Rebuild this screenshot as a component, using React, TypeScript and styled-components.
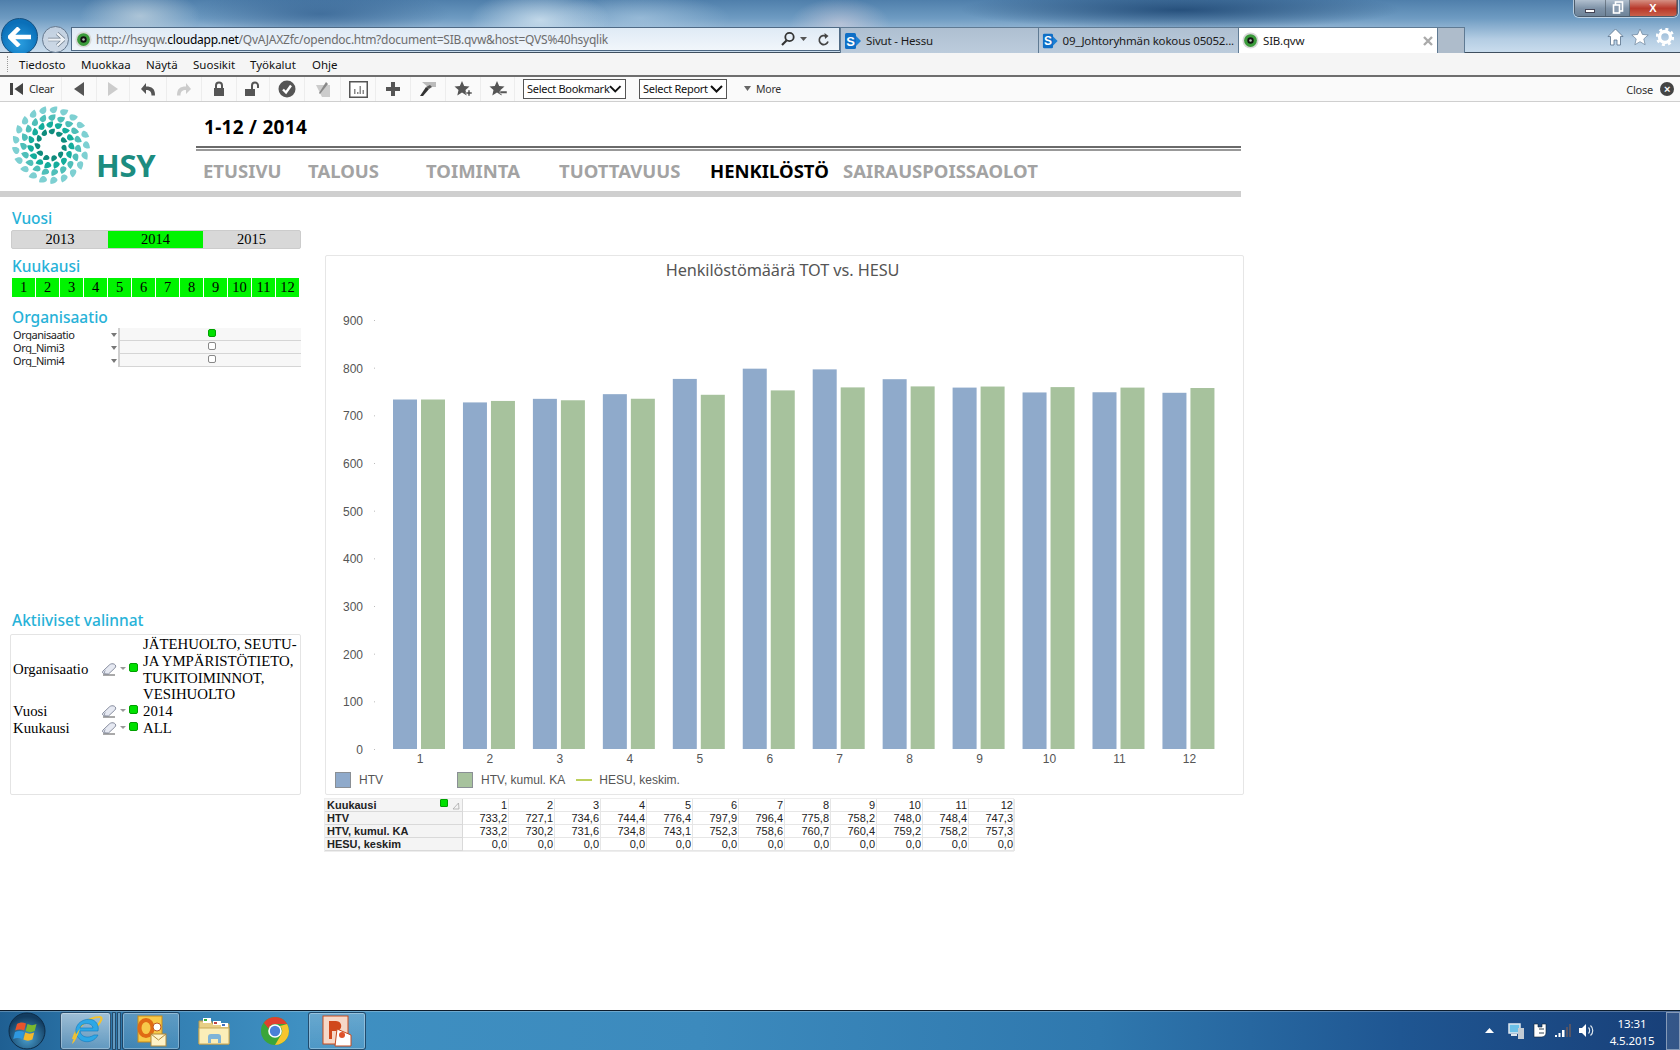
import React from 'react';
import styled, { createGlobalStyle } from 'styled-components';

const Global = createGlobalStyle`
  html, body { margin: 0; padding: 0; background: #fff; }
  * { box-sizing: border-box; }
  #root { width: 1680px; height: 1050px; overflow: hidden; }
`;
const UI = `"Noto Sans", "Liberation Sans", sans-serif`;
const SERIF = `"Liberation Serif", serif`;
const ARIAL = `"Liberation Sans", sans-serif`;

const Page = styled.div`
  width: 1680px; height: 1050px; display: flex; flex-direction: column; position: relative; overflow: hidden; background: #fff; font-family: ${UI};
`;
/* ---------- browser chrome ---------- */
const Glass = styled.header`
  height: 53px; flex: none; position: relative; display: flex; align-items: flex-start; padding-top: 27px;
  background:
    radial-gradient(ellipse 70px 30px at 540px 20px, rgba(220,235,245,.75), transparent),
    radial-gradient(ellipse 60px 28px at 140px 16px, rgba(200,215,225,.7), transparent),
    radial-gradient(ellipse 50px 26px at 840px 24px, rgba(225,215,225,.55), transparent),
    radial-gradient(ellipse 90px 25px at 640px 18px, rgba(190,215,235,.5), transparent),
    radial-gradient(ellipse 220px 20px at 1180px 10px, rgba(20,60,105,.75), transparent),
    radial-gradient(ellipse 130px 24px at 320px 14px, rgba(35,80,130,.55), transparent),
    linear-gradient(180deg, #4f7fab 0%, #6e9bc2 35%, #b4cde3 75%, #c9dced 100%);
  border-bottom: 1px solid #3f4f5f;
`;
const NavCluster = styled.div`
  width: 71px; height: 26px; flex: none; position: relative;
`;
const BackBtn = styled.div`
  position: absolute; left: 1px; top: -9px; width: 37px; height: 37px; border-radius: 50%;
  background: radial-gradient(circle at 50% 70%, #2a9ee0, #0a6fb8 70%); border: 1px solid #134f80;
  display: flex; align-items: center; justify-content: center;
`;
const FwdBtn = styled.div`
  position: absolute; left: 42px; top: -1px; width: 27px; height: 27px; border-radius: 50%;
  background: rgba(205,215,228,.8); border: 1px solid #65798f;
  display: flex; align-items: center; justify-content: center;
`;
const Address = styled.div`
  width: 769px; height: 24px; flex: none; display: flex; align-items: center; padding: 0 8px 0 3px; gap: 4px;
  background: linear-gradient(180deg, #dfeaf5, #f1f6fb); border: 1px solid #4f6a85; font-size: 12px; white-space: nowrap;
  color: #6d6d6d; font-family: ${UI}; letter-spacing: -0.02em;
`;
const Domain = styled.span` color: #000; `;
const AddressUrl = styled.div` flex: 1; `;
const AddressTools = styled.div` display: flex; align-items: center; gap: 4px; `;
const Tabs = styled.div` display: flex; height: 26px; flex: none; `;
const Tab = styled.div<{ $active?: boolean; $w: number }>`
  width: ${p => p.$w}px; display: flex; align-items: center; gap: 4px; padding: 0 4px 0 3px; font-size: 11.5px; white-space: nowrap; overflow: hidden;
  letter-spacing: -0.015em; color: #1a1a1a;
  background: ${p => (p.$active ? '#fff' : 'linear-gradient(180deg,#aebfd1,#bcccdc)')};
  border: 1px solid #5f7a93; border-bottom: none; margin-right: -1px;
`;
const TabBlank = styled.div`
  width: 28px; background: #aebccb; border: 1px solid #5f7a93; border-bottom: none;
`;
const TabLabel = styled.span` flex: 1; `;
const IeTools = styled.div`
  margin-left: auto; padding: 1px 6px 0 0; display: flex; gap: 7px; align-items: center;
`;
const WinControls = styled.div`
  position: absolute; right: 2px; top: -1px; width: 104px; height: 18px; display: flex; border: 1px solid #4c5c6c; border-top: none; border-radius: 0 0 5px 5px; overflow: hidden;
  box-shadow: 0 0 0 1px rgba(255,255,255,.55);
`;
const WinBtn = styled.div<{ $w: number; $close?: boolean }>`
  width: ${p => p.$w}px; display: flex; align-items: center; justify-content: center; color: #fff; font: bold 11px ${ARIAL};
  background: ${p => (p.$close ? 'linear-gradient(180deg,#d99b8e,#b8382a 55%,#c9604a)' : 'linear-gradient(180deg,#b7c5d3,#7f93a8 55%,#6e8398)')};
  border-right: 1px solid rgba(60,70,80,.5);
`;
const MinBar = styled.span` width: 10px; height: 4px; background: #fff; border: 1px solid #445; margin-top: 6px; `;

const MenuBar = styled.nav`
  height: 24px; flex: none; background: #f5f5f5; border-bottom: 2px solid #6e6e6e; display: flex; align-items: center; font-size: 11.5px; color: #111;
  padding-left: 7px; position: relative;
`;
const Grip = styled.span` width: 1px; height: 16px; border-left: 1px dotted #999; margin-right: 11px; `;
const MenuItem = styled.span<{ $w: number }>` width: ${p => p.$w}px; `;

const Toolbar = styled.div`
  height: 25px; flex: none; background: #fafafa; border-bottom: 1px solid #cfcfcf; display: flex; align-items: center; font-size: 11px; color: #333;
`;
const ToolClear = styled.div`
  width: 62px; height: 100%; padding: 0 0 1px 10px; display: flex; align-items: center; gap: 5px; border-right: 1px solid #ededed; letter-spacing: -0.03em;
`;
const ToolBtn = styled.div<{ $w?: number }>`
  width: ${p => p.$w ?? 35}px; height: 100%; display: flex; align-items: center; justify-content: center; border-right: 1px solid #ededed;
`;
const SelectBox = styled.div<{ $w: number; $ml: number }>`
  width: ${p => p.$w}px; margin-left: ${p => p.$ml}px; height: 20px; border: 1px solid #555; background: #fff; display: flex; align-items: center; justify-content: space-between; padding: 0 3px 1px 3px;
  font-size: 11px; color: #111; letter-spacing: -0.025em; white-space: nowrap;
`;
const More = styled.div` margin-left: 17px; padding-bottom: 1px; display: flex; align-items: center; gap: 5px; font-size: 10.5px; letter-spacing: -0.02em; `;
const CloseBox = styled.div` margin-left: auto; padding-right: 6px; display: flex; align-items: center; gap: 7px; letter-spacing: -0.02em; `;
const CloseDot = styled.span`
  width: 14px; height: 14px; border-radius: 50%; background: #444; color: #fff; font: bold 11px ${ARIAL}; display: inline-flex; align-items: center; justify-content: center;
`;

/* ---------- document ---------- */
const Doc = styled.main` flex: 1; min-height: 0; display: flex; flex-direction: column; `;
const Header = styled.div` height: 89px; flex: none; display: flex; width: 1241px; `;
const LogoBlock = styled.div` width: 196px; flex: none; position: relative; padding: 2px 0 0 10px; `;
const LogoWord = styled.span`
  position: absolute; left: 96px; top: 48px; font: bold 31px/1 ${UI}; color: #1c8c80; letter-spacing: -0.01em;
`;
const HeaderRight = styled.div` flex: 1; display: flex; flex-direction: column; `;
const TitleRow = styled.div`
  height: 46px; padding: 12px 0 0 8px; font: bold 19px/26px ${UI}; color: #000; letter-spacing: .015em; border-bottom: 2px solid #6a6a6a;
`;
const RuleTwo = styled.div` height: 2px; margin-top: 1px; background: #999; `;
const NavRow = styled.div` display: flex; padding: 8px 0 0 7px; `;
const NavItem = styled.div<{ $w: number; $active?: boolean }>`
  width: ${p => p.$w}px; font: bold 18.5px/24px ${UI}; color: ${p => (p.$active ? '#000' : '#a3a3a3')}; white-space: nowrap; letter-spacing: 0;
`;
const Strip = styled.div` width: 1241px; height: 6px; flex: none; background: #cfcfcf; `;
const Body = styled.div` flex: 1; min-height: 0; display: flex; `;
const Sidebar = styled.aside` width: 325px; flex: none; padding: 12px 0 0 11px; display: flex; flex-direction: column; `;
const SectionLabel = styled.div<{ $mt?: number }>`
  margin-top: ${p => p.$mt ?? 0}px; height: 18px; padding-left: 1px; font-size: 15.5px; line-height: 18px; color: #27b2d8; font-weight: 500;
`;
const YearRow = styled.div`
  width: 290px; height: 19px; margin-top: 3px; display: flex; background: #d8d8d8; border: 1px solid #ccc; border-radius: 2px;
`;
const YearCell = styled.div<{ $on?: boolean; $w: number }>`
  width: ${p => p.$w}px; text-align: center; font: 14.5px/17px ${SERIF}; color: #000; background: ${p => (p.$on ? '#00f400' : 'transparent')};
`;
const MonthRow = styled.div`
  width: 288px; height: 19px; margin: 3px 0 0 1px; display: grid; grid-template-columns: repeat(12, 24px); 
`;
const MonthCell = styled.div`
  background: #00f400; border-right: 1px solid #fff; text-align: center; font: 14.5px/18px ${SERIF}; color: #000;
`;
const OrgRows = styled.div` margin-top: 2px; `;
const OrgRow = styled.div`
  width: 290px; height: 13px; display: flex; font-size: 11px; line-height: 13px; color: #222; overflow: hidden;
`;
const OrgName = styled.div` width: 94px; padding-left: 2px; height: 13px; overflow: hidden; letter-spacing: -0.04em; `;
const OrgCaret = styled.div`
  width: 15px; display: flex; align-items: center; justify-content: flex-end; padding-right: 1px; border-right: 2px solid #cfcfcf;
`;
const CaretShape = styled.span`
  width: 0; height: 0; border-left: 3px solid transparent; border-right: 3px solid transparent; border-top: 4px solid #777;
`;
const OrgTrack = styled.div`
  flex: 1; background: #f7f7f7; border-bottom: 1px solid #d5d5d5; display: flex; justify-content: center; padding: 0 0 0 3px;
`;
const Led = styled.span<{ $on?: boolean }>`
  width: 8px; height: 8px; flex: none; margin-top: 1px; border-radius: 2px; border: 1px solid ${p => (p.$on ? '#00a000' : '#888')}; background: ${p => (p.$on ? '#00e000' : '#fff')};
`;
const SelLed = styled(Led)`
  width: 9px; height: 9px; margin-top: -5px;
`;
const SelBox = styled.div`
  width: 291px; height: 161px; margin: 5px 0 0 -1px; border: 1px solid #e4e4e4; border-radius: 2px; padding: 1px 2px 0;
`;
const SelRow = styled.div`
  display: grid; grid-template-columns: 89px 40px 1fr; font: 14.8px/16.8px ${SERIF}; color: #000;
`;
const SelLabel = styled.div` align-self: center; `;
const SelIcons = styled.div` align-self: center; display: flex; align-items: center; gap: 3px; height: 17px; `;
const SelCaret = styled.span`
  width: 0; height: 0; margin-top: -3px; border-left: 3px solid transparent; border-right: 3px solid transparent; border-top: 3px solid #999; 
`;
const SelValue = styled.div` padding-left: 1px; width: 158px; `;

const Main = styled.section` flex: 1; min-width: 0; padding-top: 58px; display: flex; flex-direction: column; `;
const ChartPanel = styled.div`
  width: 919px; height: 540px; border: 1px solid #e6e6e6; border-radius: 2px; display: flex; flex-direction: column;
`;
const ChartTitle = styled.div`
  height: 29px; padding: 3px 4px 0 0; text-align: center; font: 16.3px/22px ${UI}; color: #555; letter-spacing: -0.005em;
`;
const ChartSvg = styled.svg` display: block; flex: none; `;
const Legend = styled.div`
  flex: 1; display: flex; align-items: center; font: 12px ${ARIAL}; color: #555; padding: 0 0 0 9px;
`;
const LegendSwatch = styled.span<{ $c: string }>`
  width: 16px; height: 16px; background: ${p => p.$c}; border: 1px solid #8a8f95; margin-right: 8px;
`;
const LegendLine = styled.span` width: 16px; height: 2px; background: #bcd05c; margin: 0 7px 0 11px; `;
const LegendText = styled.span<{ $w?: number }>` width: ${p => (p.$w ? p.$w + 'px' : 'auto')}; `;
const Table = styled.div`
  margin: 3px 0 0 -1px; width: 690px; display: grid; grid-template-columns: 138px repeat(12, 46px); border: 1px solid #ededed; font: 11px/12px ${ARIAL}; color: #222;
`;
const HeadCell = styled.div`
  height: 13px; background: #f4f4f4; font-weight: bold; padding-left: 2px; border-bottom: 1px solid #d9d9d9; border-right: 1px solid #d9d9d9; position: relative; color: #222;
`;
const ValCell = styled.div`
  height: 13px; text-align: right; padding-right: 1px; border-bottom: 1px solid #e6e6e6; border-right: 1px solid #e6e6e6;
`;
const TableLed = styled.span`
  position: absolute; right: 14px; top: 0; width: 8px; height: 8px; background: #00e000; border: 1px solid #00a000; border-radius: 1px;
`;
const SortMark = styled.svg` position: absolute; right: 2px; top: 3px; `;

/* ---------- taskbar ---------- */
const Taskbar = styled.footer`
  height: 40px; flex: none; display: flex; align-items: center; position: relative; border-top: 1px solid #0c1c2c;
  background: linear-gradient(90deg, #1f5f92 0, #2d77ab 100px, #3f90c2 300px, #3c8abd 700px, #2f78ae 1100px, #1f5692 1400px, #183f78 1680px);
  box-shadow: inset 0 1px 0 rgba(255,255,255,.25);
`;
const Orb = styled.div` width: 60px; flex: none; display: flex; padding-left: 8px; `;
const TaskBtn = styled.div<{ $w: number; $ml?: number; $on?: boolean; $bare?: boolean }>`
  width: ${p => p.$w}px; margin-left: ${p => p.$ml ?? 0}px; height: 38px; flex: none; display: flex; align-items: center; justify-content: center; border-radius: 3px;
  border: 1px solid ${p => (p.$bare ? 'transparent' : 'rgba(10,40,70,.7)')};
  background: ${p => (p.$bare ? 'none' : p.$on ? 'linear-gradient(180deg,rgba(255,255,255,.55),rgba(255,255,255,.25))' : 'linear-gradient(180deg,rgba(255,255,255,.22),rgba(255,255,255,.08))')};
  box-shadow: ${p => (p.$bare ? 'none' : 'inset 0 0 0 1px rgba(255,255,255,.3)')};
`;
const Gripper = styled.div` width: 4px; height: 38px; margin-left: 1px; border: 1px solid rgba(10,40,70,.7); background: rgba(255,255,255,.25); border-radius: 1px; `;
const Tray = styled.div` margin-left: auto; height: 100%; display: flex; align-items: center; `;
const TrayIcon = styled.div<{ $w: number }>` width: ${p => p.$w}px; display: flex; justify-content: center; `;
const Clock = styled.div`
  width: 68px; text-align: center; color: #fff; font: 11.5px/17px ${UI}; padding-top: 2px; letter-spacing: -0.01em;
`;
const ShowDesktop = styled.div`
  width: 14px; height: 38px; margin-right: 0; border: 1px solid rgba(255,255,255,.4); background: rgba(255,255,255,.12);
`;

/* ---------- icons ---------- */
const QvIcon = () => (
  <svg width="17" height="17" viewBox="0 0 16 16"><circle cx="8" cy="8" r="7.6" fill="#d8d8d8" /><circle cx="8" cy="8" r="6" fill="#3a9a3a" /><circle cx="8" cy="8" r="3" fill="#111" /><circle cx="8" cy="8" r="1.2" fill="#bbb" /></svg>
);
const SpIcon = () => (
  <svg width="18" height="18" viewBox="0 0 18 18">
    <path d="M11 3l6 6-6 6z" fill="#1b7fd4" />
    <rect x="1" y="1" width="11" height="16" rx="1.5" fill="#0f6fc6" />
    <text x="6.500" y="13.500" textAnchor="middle" fontFamily={ARIAL} fontWeight="bold" fontSize="13" fill="#fff">S</text>
  </svg>
);
const Drop: React.FC<{ x: number; y: number; a: number; l: number; c: string }> = ({ x, y, a, l, c }) => (
  <path transform={`translate(${x} ${y}) rotate(${a})`} fill={c}
    d={`M${l * 0.15} ${-l} C ${l * 1.1} ${-l * 0.2} ${l * 1.0} ${l * 0.9} 0 ${l * 0.9} C ${-l * 1.0} ${l * 0.9} ${-l * 0.8} ${-l * 0.1} ${l * 0.15} ${-l}Z`} />
);
const rings = [
  { r: 36, n: 21, l: 4.4, c: '#7ed0d2', o: 0 },
  { r: 28, n: 19, l: 4.2, c: '#4fbfb9', o: 7 },
  { r: 21, n: 15, l: 4, c: '#14ad9c', o: 3 },
  { r: 14, n: 11, l: 3.6, c: '#0e8c7d', o: 12 },
];
const Logo = () => (
  <svg width="82" height="82" viewBox="-41 -41 82 82">
    {rings.map(g => Array.from({ length: g.n }, (_, i) => {
      const t = (i / g.n) * 360 + g.o;
      const rad = (t * Math.PI) / 180;
      return <Drop key={g.r + '-' + i} x={g.r * Math.cos(rad)} y={g.r * Math.sin(rad)} a={t + 130} l={g.l} c={g.c} />;
    }))}
  </svg>
);
const I = ({ w = 16, h = 16, vb, children }: { w?: number; h?: number; vb?: string; children: React.ReactNode }) => (
  <svg width={w} height={h} viewBox={vb ?? `0 0 ${w} ${h}`}>{children}</svg>
);
const Chev = () => <I w={13} h={8}><path d="M1 1l5.500 5.500L12 1" fill="none" stroke="#111" strokeWidth="2" /></I>;
const Eraser = () => (
  <svg width="15" height="13" viewBox="0 0 15 13">
    <path d="M1 12h12" stroke="#555" strokeWidth="1" />
    <path d="M.8 8.200L7.500 1.800C8.800.6 10.800.4 12.300 1.200c1.800 1 1.800 2.700.5 3.900L6.500 11H3C1 11 0 9.400.8 8.200z" fill="#e6e9f2" stroke="#6c7488" strokeWidth=".8" />
    <path d="M3 10.500c-.8-1-.6-2 .3-3" fill="none" stroke="#6c7488" strokeWidth=".7" />
  </svg>
);

const months = Array.from({ length: 12 }, (_, i) => i + 1);
const htv = [733.2, 727.1, 734.6, 744.4, 776.4, 797.9, 796.4, 775.8, 758.2, 748.0, 748.4, 747.3];
const ka = [733.2, 730.2, 731.6, 734.8, 743.1, 752.3, 758.6, 760.7, 760.4, 759.2, 758.2, 757.3];
const fmt = (v: number) => v.toFixed(1).replace('.', ',');
const BASE = 464, UNIT = 429 / 900;

const Chart = () => (
  <ChartSvg width="917" height="480" viewBox="0 0 917 480">
    {[900, 800, 700, 600, 500, 400, 300, 200, 100, 0].map(v => (
      <g key={v}>
        <text x="37" y={BASE - v * UNIT + 5} textAnchor="end" fontFamily={ARIAL} fontSize="12" fill="#555">{v}</text>
        <rect x="48" y={BASE - v * UNIT} width="1" height="1" fill="#bbb" />
      </g>
    ))}
    {months.map((m, i) => (
      <g key={m}>
        <rect x={67 + i * 69.95} y={BASE - htv[i] * UNIT} width="24" height={htv[i] * UNIT} fill="#8faacb" />
        <rect x={95 + i * 69.95} y={BASE - ka[i] * UNIT} width="24" height={ka[i] * UNIT} fill="#a7c29d" />
        <text x={94 + i * 69.95} y={478} textAnchor="middle" fontFamily={ARIAL} fontSize="12" fill="#555">{m}</text>
      </g>
    ))}
  </ChartSvg>
);

const tableRows: { head: string; vals: string[] }[] = [
  { head: 'HTV', vals: htv.map(fmt) },
  { head: 'HTV, kumul. KA', vals: ka.map(fmt) },
  { head: 'HESU, keskim', vals: months.map(() => '0,0') },
];

export default function App() {
  return (
    <>
      <Global />
      <Page>
        <Glass>
          <NavCluster>
            <BackBtn>
              <svg width="24" height="20" viewBox="0 0 24 20"><path d="M11 1L2 10l9 9M3 10h20" fill="none" stroke="#fff" strokeWidth="4.5" /></svg>
            </BackBtn>
            <FwdBtn>
              <svg width="18" height="15" viewBox="0 0 16 13"><path d="M9 1l6 5.500L9 12M14 6.500H1" fill="none" stroke="#6f7d8c" strokeWidth="3.200" /><path d="M9 1l6 5.500L9 12M14 6.500H1" fill="none" stroke="#eef2f6" strokeWidth="2" /></svg>
            </FwdBtn>
          </NavCluster>
          <Address>
            <QvIcon />
            <AddressUrl>http://hsyqw.<Domain>cloudapp.net</Domain>/QvAJAXZfc/opendoc.htm?document=SIB.qvw&amp;host=QVS%40hsyqlik</AddressUrl>
            <AddressTools>
              <svg width="16" height="16" viewBox="0 0 16 16"><circle cx="9.500" cy="6" r="4.200" fill="none" stroke="#333" strokeWidth="1.800" /><path d="M6.500 9.500L2 14" stroke="#333" strokeWidth="2.200" /></svg>
              <svg width="8" height="5" viewBox="0 0 8 5"><path d="M0 0h7L3.500 4z" fill="#555" /></svg>
              <svg width="14" height="15" viewBox="0 0 14 15" style={{ marginLeft: 5 }}><path d="M11 9.500a4.500 4.500 0 1 1-1.500-5" fill="none" stroke="#444" strokeWidth="1.700" /><path d="M7.500 1l4 3-3.500 3z" fill="#444" /></svg>
            </AddressTools>
          </Address>
          <Tabs>
            <Tab $w={199}><SpIcon /><TabLabel>Sivut - Hessu</TabLabel></Tab>
            <Tab $w={201}><SpIcon /><TabLabel>09_Johtoryhmän kokous 05052...</TabLabel></Tab>
            <Tab $w={200} $active><QvIcon /><TabLabel>SIB.qvw</TabLabel><svg width="10" height="10" viewBox="0 0 10 10"><path d="M1 1l8 8M9 1l-8 8" stroke="#aaa" strokeWidth="2.400" /></svg></Tab>
            <TabBlank />
          </Tabs>
          <IeTools>
            <svg width="17" height="18" viewBox="0 0 17 18"><path d="M8.500 1L1 8.500h2.500V17h3.500v-5h3v5h3.500V8.500H16z" fill="#fff" stroke="#57708a" strokeWidth=".8" /></svg>
            <svg width="18" height="18" viewBox="0 0 18 18"><path d="M9 1l2.400 5.400 5.800.6-4.400 3.900 1.300 5.800L9 13.700l-5.100 3 1.300-5.800L.8 7l5.800-.6z" fill="#fff" stroke="#57708a" strokeWidth=".6" /></svg>
            <svg width="18" height="18" viewBox="0 0 18 18"><circle cx="9" cy="9" r="5.500" fill="none" stroke="#fff" strokeWidth="3.400" /><circle cx="9" cy="9" r="8" fill="none" stroke="#fff" strokeWidth="2.400" strokeDasharray="3 3.300" /></svg>
          </IeTools>
          <WinControls>
            <WinBtn $w={32}><MinBar /></WinBtn>
            <WinBtn $w={24}><svg width="12" height="13" viewBox="0 0 12 13"><rect x="3.500" y="1" width="7" height="9" fill="none" stroke="#fff" strokeWidth="1.600" /><rect x="1.500" y="4" width="6" height="8" fill="#8a9cb0" stroke="#fff" strokeWidth="1.600" /></svg></WinBtn>
            <WinBtn $w={48} $close>X</WinBtn>
          </WinControls>
        </Glass>
        <MenuBar>
          <Grip />
          <MenuItem $w={62}>Tiedosto</MenuItem>
          <MenuItem $w={65}>Muokkaa</MenuItem>
          <MenuItem $w={47}>Näytä</MenuItem>
          <MenuItem $w={57}>Suosikit</MenuItem>
          <MenuItem $w={62}>Työkalut</MenuItem>
          <MenuItem $w={40}>Ohje</MenuItem>
        </MenuBar>
        <Toolbar>
          <ToolClear>
            <I w={14} h={14}><path d="M0 1h3v12H0zM13 1v12L4.500 7z" fill="#444" /></I>
            Clear
          </ToolClear>
          <ToolBtn><I w={10} h={14}><path d="M10 0v14L0 7z" fill="#555" /></I></ToolBtn>
          <ToolBtn $w={33}><I w={10} h={14}><path d="M0 0v14l10-7z" fill="#ccc" /></I></ToolBtn>
          <ToolBtn $w={37}><I w={18} h={14}><path d="M2 7l5-6v3.500c6 0 9 2 9 9h-3.500c0-4-2-5.500-5.500-5.500V12z" fill="#555" /></I></ToolBtn>
          <ToolBtn><I w={18} h={14}><path d="M16 7l-5-6v3.500c-6 0-9 2-9 9h3.500c0-4 2-5.500 5.500-5.500V12z" fill="#ccc" /></I></ToolBtn>
          <ToolBtn><I w={14} h={16}><path d="M2 7h10v8H2z" fill="#555" /><path d="M4 7V4.500a3 3 0 0 1 6 0V7" fill="none" stroke="#555" strokeWidth="2" /></I></ToolBtn>
          <ToolBtn $w={33}><I w={18} h={16}><path d="M1 8h10v7H1z" fill="#555" /><path d="M8 8V4.500a3 3 0 0 1 6 0V7" fill="none" stroke="#555" strokeWidth="2" /></I></ToolBtn>
          <ToolBtn><I w={18} h={18}><circle cx="9" cy="9" r="8.500" fill="#555" /><path d="M5 9.500l3 3 5-7" fill="none" stroke="#fff" strokeWidth="2.400" /></I></ToolBtn>
          <ToolBtn $w={36}><I w={16} h={18}><path d="M1 5h14v12H7z" fill="#ccc" /><path d="M4 13l7-11 2 2-8 10z" fill="#888" /></I></ToolBtn>
          <ToolBtn><I w={19} h={17}><rect x=".75" y=".75" width="17.500" height="15.500" fill="#fff" stroke="#555" strokeWidth="1.500" /><path d="M5 8h1.500v5H5zM8 11h1.500v2H8zM10.500 5H12v8h-1.500zM13.500 9H15v4h-1.500z" fill="#888" /></I></ToolBtn>
          <ToolBtn><I w={14} h={14}><path d="M5 0h4v5h5v4H9v5H5V9H0V5h5z" fill="#555" /></I></ToolBtn>
          <ToolBtn><I w={18} h={16}><path d="M3 1h14v5H9z" fill="#bbb" /><path d="M1 15l6-9 3 2-6 7z" fill="#333" /><path d="M7 6l4-2 2 2-3 2z" fill="#555" /></I></ToolBtn>
          <ToolBtn><I w={18} h={17}><path d="M8 0l2.200 5 5.300.5-4 3.600 1.200 5.300L8 11.600l-4.700 2.800 1.200-5.300-4-3.600L5.800 5z" fill="#555" /><path d="M12 11h2V9h2v2h2v2h-2v2h-2v-2h-2z" fill="#555" stroke="#fafafa" strokeWidth=".5" /></I></ToolBtn>
          <ToolBtn $w={34}><I w={18} h={17}><path d="M8 0l2.200 5 5.300.5-4 3.600 1.200 5.300L8 11.600l-4.700 2.800 1.200-5.300-4-3.600L5.800 5z" fill="#555" /><path d="M11 10h7v2.500h-7z" fill="#555" stroke="#fafafa" strokeWidth=".5" /></I></ToolBtn>
          <SelectBox $w={103} $ml={8}>Select Bookmark <Chev /></SelectBox>
          <SelectBox $w={88} $ml={13}>Select Report <Chev /></SelectBox>
          <More>
            <I w={7} h={5}><path d="M0 0h7L3.500 5z" fill="#666" /></I>
            More
          </More>
          <CloseBox>Close <CloseDot>×</CloseDot></CloseBox>
        </Toolbar>
        <Doc>
          <Header>
            <LogoBlock>
              <Logo />
              <LogoWord>HSY</LogoWord>
            </LogoBlock>
            <HeaderRight>
              <TitleRow>1-12 / 2014</TitleRow>
              <RuleTwo />
              <NavRow>
                <NavItem $w={105}>ETUSIVU</NavItem>
                <NavItem $w={118}>TALOUS</NavItem>
                <NavItem $w={133}>TOIMINTA</NavItem>
                <NavItem $w={151}>TUOTTAVUUS</NavItem>
                <NavItem $w={133} $active>HENKILÖSTÖ</NavItem>
                <NavItem $w={200}>SAIRAUSPOISSAOLOT</NavItem>
              </NavRow>
            </HeaderRight>
          </Header>
          <Strip />
          <Body>
            <Sidebar>
              <SectionLabel>Vuosi</SectionLabel>
              <YearRow>
                <YearCell $w={96}>2013</YearCell>
                <YearCell $w={95} $on>2014</YearCell>
                <YearCell $w={97}>2015</YearCell>
              </YearRow>
              <SectionLabel $mt={8}>Kuukausi</SectionLabel>
              <MonthRow>{months.map(m => <MonthCell key={m}>{m}</MonthCell>)}</MonthRow>
              <SectionLabel $mt={11}>Organisaatio</SectionLabel>
              <OrgRows>
                <OrgRow><OrgName>Organisaatio</OrgName><OrgCaret><CaretShape /></OrgCaret><OrgTrack><Led $on /></OrgTrack></OrgRow>
                <OrgRow><OrgName>Org_Nimi3</OrgName><OrgCaret><CaretShape /></OrgCaret><OrgTrack><Led /></OrgTrack></OrgRow>
                <OrgRow><OrgName>Org_Nimi4</OrgName><OrgCaret><CaretShape /></OrgCaret><OrgTrack><Led /></OrgTrack></OrgRow>
              </OrgRows>
              <SectionLabel $mt={244}>Aktiiviset valinnat</SectionLabel>
              <SelBox>
                <SelRow>
                  <SelLabel>Organisaatio</SelLabel>
                  <SelIcons><Eraser /><SelCaret /><SelLed $on /></SelIcons>
                  <SelValue>JÄTEHUOLTO, SEUTU- JA YMPÄRISTÖTIETO, TUKITOIMINNOT, VESIHUOLTO</SelValue>
                </SelRow>
                <SelRow>
                  <SelLabel>Vuosi</SelLabel>
                  <SelIcons><Eraser /><SelCaret /><SelLed $on /></SelIcons>
                  <SelValue>2014</SelValue>
                </SelRow>
                <SelRow>
                  <SelLabel>Kuukausi</SelLabel>
                  <SelIcons><Eraser /><SelCaret /><SelLed $on /></SelIcons>
                  <SelValue>ALL</SelValue>
                </SelRow>
              </SelBox>
            </Sidebar>
            <Main>
              <ChartPanel>
                <ChartTitle>Henkilöstömäärä TOT vs. HESU</ChartTitle>
                <Chart />
                <Legend>
                  <LegendSwatch $c="#8faacb" /><LegendText $w={98}>HTV</LegendText>
                  <LegendSwatch $c="#a7c29d" /><LegendText>HTV, kumul. KA</LegendText>
                  <LegendLine /><LegendText>HESU, keskim.</LegendText>
                </Legend>
              </ChartPanel>
              <Table>
                <HeadCell>Kuukausi<TableLed /><SortMark width="8" height="8" viewBox="0 0 8 8"><path d="M6.500 1L7 7H1z" fill="none" stroke="#aaa" strokeWidth=".8" /></SortMark></HeadCell>
                {months.map(m => <ValCell key={m}>{m}</ValCell>)}
                {tableRows.map(r => (
                  <React.Fragment key={r.head}>
                    <HeadCell>{r.head}</HeadCell>
                    {r.vals.map((v, i) => <ValCell key={i}>{v}</ValCell>)}
                  </React.Fragment>
                ))}
              </Table>
            </Main>
          </Body>
        </Doc>
        <Taskbar>
          <Orb>
            <svg width="38" height="38" viewBox="0 0 38 38">
              <defs><radialGradient id="orb" cx="50%" cy="70%" r="60%"><stop offset="0" stopColor="#4aa0d0" /><stop offset="1" stopColor="#123c60" /></radialGradient></defs>
              <circle cx="19" cy="19" r="18" fill="url(#orb)" stroke="#0d2c48" />
              <path d="M9 12c3-2 6-2 9-.5l-1.800 7c-3-1.500-6-1.500-9 0z" fill="#e8542c" />
              <path d="M19.500 12c3 1.500 6 1.500 9 0l-1.800 7c-3 1.500-6 1.500-9 0z" fill="#7ab82e" />
              <path d="M7 20c3-1.500 6-1.500 9 0l-1.800 7c-3-1.500-6-1.500-9 0z" fill="#2e98e0" />
              <path d="M17.200 20.500c3 1.500 6 1.500 9 0l-1.800 7c-3 1.500-6 1.500-9 0z" fill="#f5b82a" />
            </svg>
          </Orb>
          <TaskBtn $w={51} $on>
            <svg width="34" height="34" viewBox="0 0 34 34">
              <path d="M4 25C8 12 20 3 31 3c3 0 1 5-3 9" fill="none" stroke="#f2c230" strokeWidth="2.200" />
              <path d="M29 17H11c.6 6 8 8 14 4h4c-3 6-10 8-15 6C8 25 5 18 8 12c3-6 11-8 16-6 4 2 6 6 5 11zM11 14h13c-.5-6-12-6-13 0z" fill="#2ea8e6" stroke="#0e78c0" strokeWidth=".6" />
              <path d="M3 30c1-5 5-12 8-15-3 8-5 13-8 15z" fill="#f2c230" />
            </svg>
          </TaskBtn>
          <Gripper />
          <Gripper />
          <TaskBtn $w={58} $ml={1}>
            <svg width="34" height="34" viewBox="0 0 34 34">
              <rect x="4" y="2" width="24" height="26" fill="#f7c949" stroke="#c88a18" />
              <ellipse cx="12" cy="14" rx="6.500" ry="8" fill="none" stroke="#e06a14" strokeWidth="4" />
              <circle cx="23" cy="13" r="4" fill="#fff" stroke="#c05a20" />
              <rect x="17" y="20" width="15" height="12" fill="#fff3c8" stroke="#b08a3c" />
              <path d="M17 20l7.500 6 7.500-6" fill="none" stroke="#b08a3c" />
            </svg>
          </TaskBtn>
          <TaskBtn $w={48} $ml={10} $bare>
            <svg width="34" height="30" viewBox="0 0 34 30">
              <path d="M2 5h12l2 3h16v20H2z" fill="#e8cf86" stroke="#b89a4a" />
              <rect x="6" y="2" width="8" height="5" fill="#fff" /><rect x="7" y="3" width="3" height="2" fill="#3ab03a" />
              <rect x="16" y="5" width="8" height="4" fill="#fff" /><rect x="17" y="6" width="3" height="2" fill="#c04040" />
              <rect x="24" y="7" width="7" height="4" fill="#fff" /><rect x="25" y="8" width="3" height="2" fill="#4070c0" />
              <path d="M2 12h30v16H2z" fill="#fbeeb8" stroke="#c8a858" />
              <path d="M11 27v-6c0-2 1-3 3-3h7c2 0 3 1 3 3v6h-3v-4h-7v4z" fill="#7fb4d8" />
            </svg>
          </TaskBtn>
          <TaskBtn $w={48} $ml={13} $bare>
            <svg width="30" height="30" viewBox="0 0 30 30">
              <circle cx="15" cy="15" r="14" fill="#3aa53a" />
              <path d="M15 1a14 14 0 0 1 12.100 7H15a7 7 0 0 0-6.500 4.500L3.800 6.800A14 14 0 0 1 15 1z" fill="#e0402f" />
              <path d="M27.100 8A14 14 0 0 1 15 29l6.500-11A7 7 0 0 0 20 10z" fill="#f6c52e" />
              <circle cx="15" cy="15" r="6.800" fill="#fff" /><circle cx="15" cy="15" r="5.200" fill="#4a80d8" />
            </svg>
          </TaskBtn>
          <TaskBtn $w={58} $ml={9}>
            <svg width="32" height="32" viewBox="0 0 32 32">
              <rect x="2" y="1" width="25" height="28" fill="#f6d8c8" stroke="#c84a1c" />
              <path d="M8 24V6h7c7 0 7 10 0 10h-4v8z" fill="#d0481c" />
              <path d="M16 14l14 6v11H14z" fill="#fff" stroke="#c84a1c" /><circle cx="21" cy="20" r="3" fill="#e0522a" />
            </svg>
          </TaskBtn>
          <Tray>
            <TrayIcon $w={32}><I w={9} h={5}><path d="M0 5l4.500-5L9 5z" fill="#fff" /></I></TrayIcon>
            <TrayIcon $w={22}><I w={16} h={16}><rect x="1" y="1" width="11" height="9" fill="#6ac0e8" stroke="#dfe8ef" strokeWidth="1.500" /><rect x="10" y="5" width="6" height="11" fill="#c4ccd4" /><rect x="3" y="11" width="6" height="2" fill="#dfe8ef" /></I></TrayIcon>
            <TrayIcon $w={25}><I w={16} h={18}><path d="M2 2h4v3h4V2h4v8c0 4-2 5-6 5H2z" fill="#fff" stroke="#123" strokeWidth=".6" /><path d="M7 7h5M7 11h5" stroke="#345" strokeWidth="1.200" /></I></TrayIcon>
            <TrayIcon $w={22}><I w={16} h={13}><path d="M0 11h2v2H0zM3.500 9h2v4h-2zM7 6h2.500v7H7z" fill="#fff" /><path d="M11 3h2v10h-2zM14 0h2v13h-2z" fill="#556" /></I></TrayIcon>
            <TrayIcon $w={24}><I w={15} h={15}><path d="M0 5h3l4-4v13l-4-4H0z" fill="#fff" /><path d="M9.500 4.500c1.500 1.500 1.500 4.500 0 6M11.500 2.500c3 2.500 3 7.500 0 10" fill="none" stroke="#dfe8ef" strokeWidth="1.200" /></I></TrayIcon>
            <Clock>13:31<br />4.5.2015</Clock>
            <ShowDesktop />
          </Tray>
        </Taskbar>
      </Page>
    </>
  );
}
